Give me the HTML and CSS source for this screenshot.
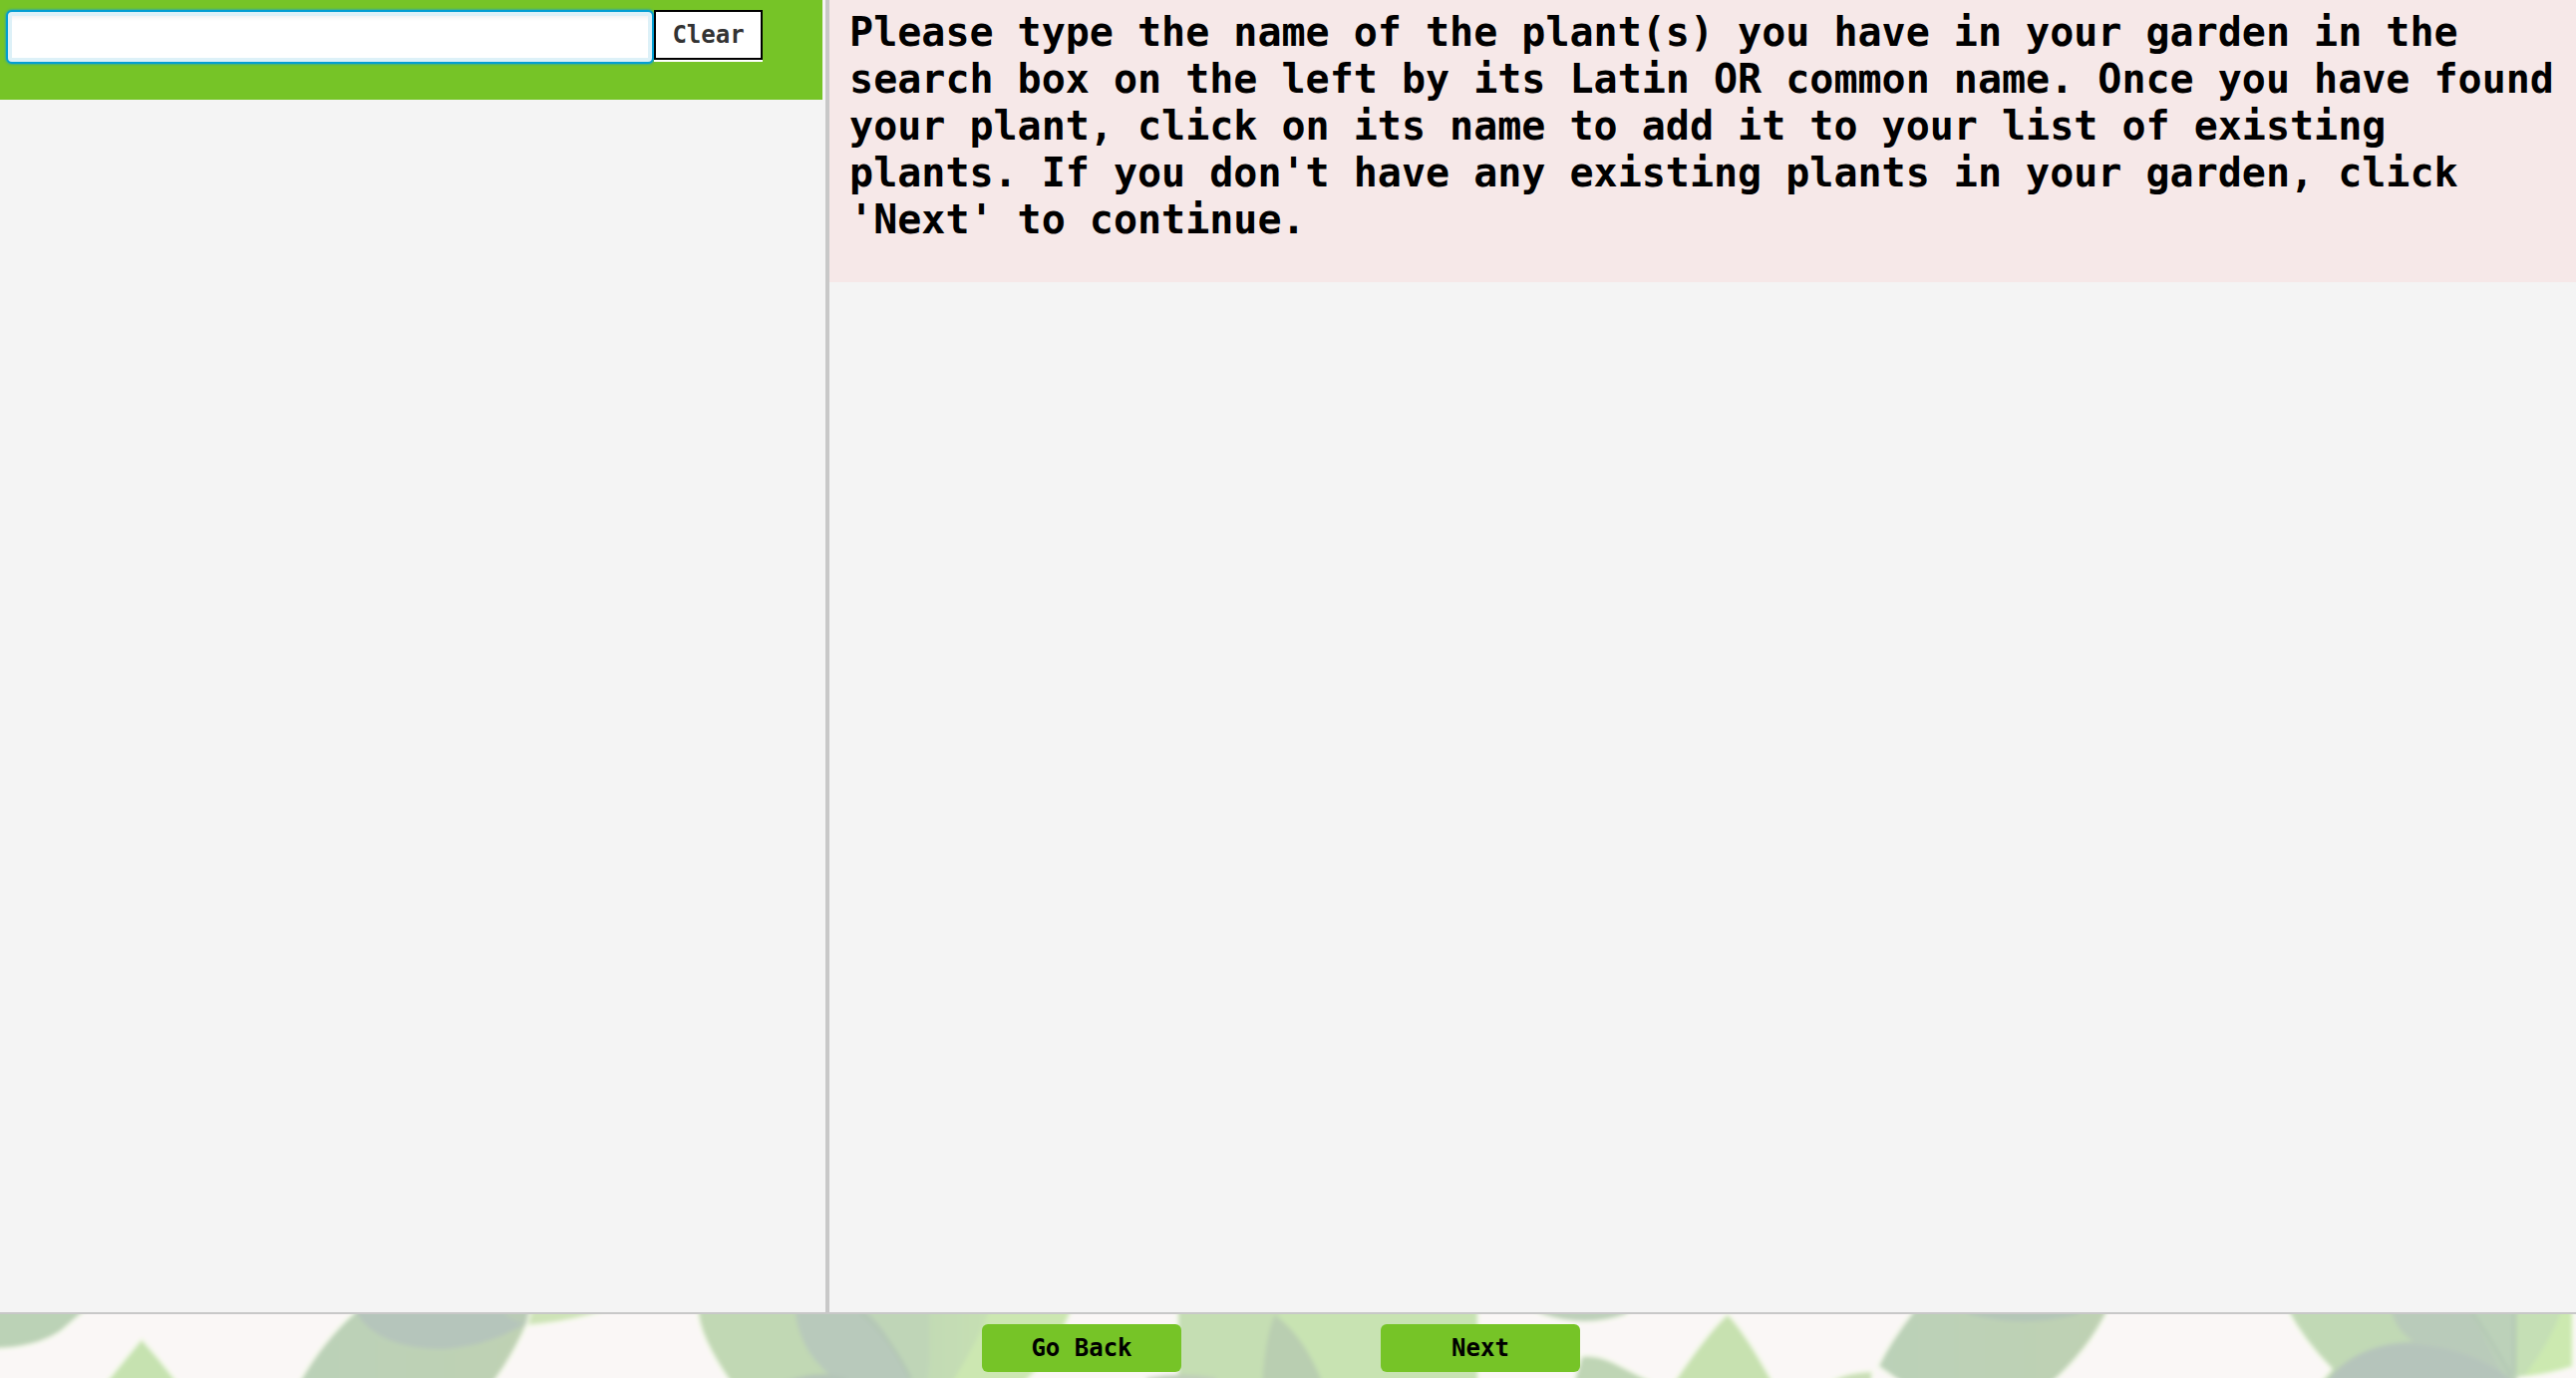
FILE: index.html
```html
<!DOCTYPE html>
<html lang="en">
<head>
<meta charset="utf-8">
<title>Existing plants</title>
<link rel="stylesheet" href="styles.css">
</head>
<body>
<main class="panes">
  <section class="pane-search">
    <form class="search-bar">
      <input class="search-input" type="text" aria-label="Plant name">
      <button class="clear-button" type="reset">Clear</button>
    </form>
  </section>
  <section class="pane-list">
    <h1 class="instructions">Please type the name of the plant(s) you have in your garden in the search box on the left by its Latin OR common name. Once you have found your plant, click on its name to add it to your list of existing plants. If you don't have any existing plants in your garden, click 'Next' to continue.</h1>
  </section>
</main>
<footer class="footer">
  <svg class="leaves" viewBox="0 0 2584 64" preserveAspectRatio="none" aria-hidden="true">
    <defs>
      <linearGradient id="blade" x1="0" x2="1" y1="0" y2="0">
        <stop offset="0" stop-color="#bbd1b8"/><stop offset="1" stop-color="#bfd1b3"/>
      </linearGradient>
      <linearGradient id="bright" x1="0" x2="1" y1="0" y2="0">
        <stop offset="0" stop-color="#c2dab5"/><stop offset="1" stop-color="#cce7b0"/>
      </linearGradient>
      <filter id="soft" x="0" y="0" width="1" height="1"><feGaussianBlur stdDeviation="2"/></filter>
    </defs>
    <g filter="url(#soft)">
      <rect x="-9" y="-9" width="2602" height="82" fill="#faf7f6"/>
      <g stroke="#f7fbed" stroke-width="5" paint-order="stroke">
        <path d="M-9 -9H90Q72 7 60 17Q34 34 -9 34Z" fill="#bbd2b6"/>
        <path d="M142 26Q124 48 106 70H178Q160 46 142 26Z" fill="#c6e2b0"/>
        <path d="M520 -9H620L592 0Q562 8 526 11Z" fill="#cee3b7"/>
        <path d="M362 -9L355 0Q325 26 300 70H493Q515 40 528 9L532 -9Z" fill="url(#blade)"/>
        <path d="M701 -9Q698 18 737 73H1020Q1052 50 1076 -9Z" fill="#c1d8b4"/>
        <path d="M1182 -9V73H1482V-9Z" fill="#c5deb3"/>
        <path d="M1530 -9L1548 0Q1590 14 1630 0L1640 -9Z" fill="#bdd0b9"/>
        <path d="M1587 43Q1600 41 1618 49L1665 73H1578Z" fill="#bfd5b5"/>
        <path d="M1733 1Q1712 20 1677 73H1780Q1750 18 1733 1Z" fill="#c7e1b0"/>
        <path d="M1838 67Q1853 59 1877 58V70Z" fill="#c9deb6"/>
        <path d="M1923 -9L1918 0Q1897 27 1885 52L1915 73H2052Q2095 37 2116 -9Z" fill="url(#blade)"/>
        <path d="M2293 -9Q2310 25 2340 55L2325 73H2515L2518 63Q2550 61 2580 52V-9Z" fill="#c1d9b5"/>
      </g>
      <path d="M358 -9V0Q380 35 445 35Q494 31 528 9Q512 8 508 -9Z" fill="#b5c5bb"/>
      <path d="M500 -9H532L528 9Q510 8 500 -9Z" fill="#b9cbb5"/>
      <path d="M865 -9H932V73H914Q900 25 865 -9Z" fill="#bfd5b7"/>
      <path d="M797 -9Q800 44 850 73H914Q900 25 863 -9Z" fill="#b8c9bb"/>
      <path d="M780 70Q820 54 850 64V73Z" fill="#b4c4b7"/>
      <path d="M932 -9H1076Q1052 50 1020 73H928Q936 40 932 -9Z" fill="url(#bright)"/>
      <path d="M995 -9H1076Q1052 50 1020 73H952Q980 30 995 -9Z" fill="#cce7b1"/>
      <path d="M1290 -9H1482V73H1325Q1312 28 1282 4Z" fill="#c8e3b2"/>
      <path d="M1279 1Q1269 22 1266 73H1328Q1310 24 1279 1Z" fill="#b9ceb1"/>
      <path d="M1150 64Q1185 57 1220 64V70H1150Z" fill="#bfcdb9"/>
      <path d="M1965 -9L1975 0Q2030 15 2085 0V-9Z" fill="#b4c6b7"/>
      <path d="M2397 -9Q2403 18 2421 27Q2370 29 2340 60L2330 73H2520L2480 -9Z" fill="#b9cbba"/>
      <path d="M2475 -9H2525V73H2518Z" fill="#bcd1b9"/>
      <path d="M2330 73Q2360 28 2420 30Q2480 34 2520 66V73Z" fill="#b5c4bb"/>
      <path d="M2524 -9H2580V52Q2550 61 2524 63Z" fill="#c5dfb5"/>
      <path d="M2572 -9H2580V52Q2558 60 2532 62Q2557 31 2572 -9Z" fill="#cce9b0"/>
      <g fill="none" stroke="#b3c7b4" stroke-width="3">
        <path d="M863 -2Q895 25 914 66"/>
        <path d="M2480 -2Q2500 28 2519 62"/>
        <path d="M2522 -2V60"/>
      </g>
    </g>
  </svg>
  <nav class="actions">
    <button class="nav-button" type="button">Go Back</button>
    <button class="nav-button" type="button">Next</button>
  </nav>
</footer>
</body>
</html>
```
FILE: styles.css
```css
* {
  box-sizing: border-box;
}

body {
  margin: 0;
  min-height: 100vh;
  display: flex;
  flex-direction: column;
  background: #f4f4f4;
  font-family: "DejaVu Sans Mono", monospace;
  font-weight: bold;
}

.panes {
  flex: 1;
  display: grid;
  grid-template-columns: 32.2% 1fr;
}

.pane-search {
  padding-right: 3px;
  border-right: 4px solid #c8c8c8;
}

.search-bar {
  display: flex;
  align-items: flex-start;
  height: 100px;
  padding: 10px 60px 0 6px;
  background: #76c427;
}

.search-input {
  flex: 1;
  min-width: 0;
  height: 54px;
  padding: 0 12px;
  border: 2px solid #039ed3;
  border-radius: 6px;
  outline: none;
  background: #fff;
  box-shadow: inset 0 0 0 4px #ddf1f8, inset 0 6px 4px #f2f2f2, 0 0 2px 1px #3fae8a;
  font: inherit;
  font-size: 24px;
}

.clear-button {
  width: 109px;
  height: 50px;
  padding: 0;
  border: 2px solid #000;
  background: #fff;
  box-shadow: 0 2px #fff;
  color: #333;
  font: inherit;
  font-size: 24px;
}

.instructions {
  margin: 0;
  padding: 9px 20px 39px;
  background: #f6e8e8;
  color: #000;
  font-size: 40px;
  line-height: 47px;
}

.footer {
  position: relative;
  height: 66px;
  border-top: 2px solid #c8c8c8;
  background: #faf7f6;
}

.leaves {
  position: absolute;
  inset: 0;
  width: 100%;
  height: 100%;
}

.actions {
  position: relative;
  display: flex;
  justify-content: center;
  gap: 200px;
  padding: 10px 14px 0 0;
}

.nav-button {
  width: 200px;
  height: 48px;
  padding: 0;
  border: 0;
  border-radius: 6px;
  background: #76c427;
  color: #000;
  font: inherit;
  font-size: 24px;
}
```
